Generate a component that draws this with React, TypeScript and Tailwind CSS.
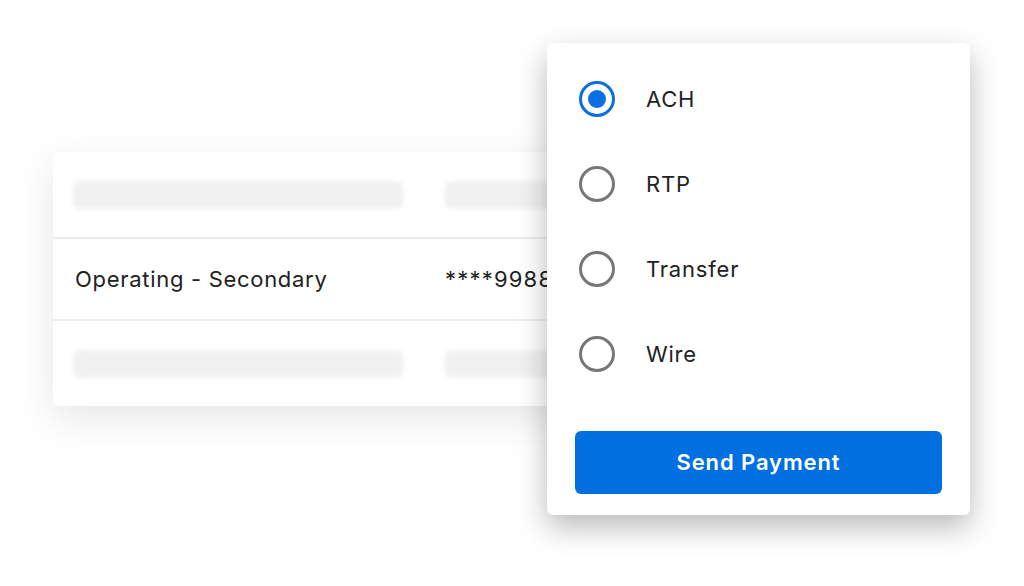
const options = ["ACH", "RTP", "Transfer", "Wire"];

function Skeleton() {
  return (
    <div className="flex h-[85px] items-center gap-[42px] px-5">
      <div className="h-[28px] w-[330px] rounded-md bg-[#f1f1f1] blur-[2px]" />
      <div className="h-[28px] w-[160px] rounded-md bg-[#f1f1f1] blur-[2px]" />
    </div>
  );
}

function Radio({ checked }: { checked: boolean }) {
  return checked ? (
    <span className="flex h-[36px] w-[36px] items-center justify-center rounded-full border-[3px] border-[#0a6fe0]">
      <span className="h-[18px] w-[18px] rounded-full bg-[#0a6fe0]" />
    </span>
  ) : (
    <span className="block h-[36px] w-[36px] rounded-full border-[3px] border-[#777777]" />
  );
}

export default function App() {
  return (
    <div
      className="relative h-[586px] w-[1024px] overflow-hidden bg-white text-[#222222]"
      style={{ fontFamily: "Inter, 'Noto Sans', sans-serif" }}
    >
      <div className="ml-[53px] mt-[152px] w-[620px] overflow-hidden rounded-[5px] bg-white shadow-[0_12px_40px_rgba(0,0,0,0.10)]">
        <Skeleton />
        <div className="flex h-[84px] items-center border-y-2 border-[#ececec] pl-[22px] text-[22px] tracking-[0.7px]">
          <span className="w-[370px]">Operating - Secondary</span>
          <span className="tracking-[1.2px]">****9988</span>
        </div>
        <Skeleton />
      </div>

      <div className="absolute left-[547px] top-[43px] flex h-[472px] w-[423px] flex-col rounded-[6px] bg-white px-7 pb-[21px] pt-[38px] shadow-[0_12px_30px_rgba(0,0,0,0.28)]">
        <div className="flex flex-col gap-[49px] pl-[4px]">
          {options.map((o, i) => (
            <label key={o} className="flex h-[36px] items-center gap-[31px] text-[22px] tracking-[0.8px]">
              <Radio checked={i === 0} />
              <span>{o}</span>
            </label>
          ))}
        </div>
        <button
          type="button"
          className="mt-auto h-[63px] w-full rounded-[6px] bg-[#006fe0] text-[22px] font-semibold tracking-[0.9px] text-white"
        >
          Send Payment
        </button>
      </div>
    </div>
  );
}
